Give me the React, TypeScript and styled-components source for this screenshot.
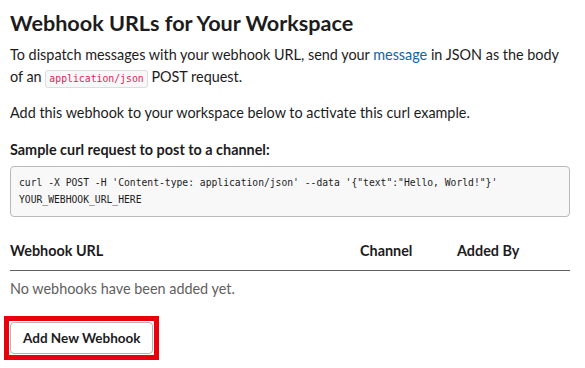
import styled, { createGlobalStyle } from "styled-components"

const Global = createGlobalStyle`
    body {
        margin: 0;
        background: #fff;
        font-family: Lato, "Noto Sans", sans-serif;
        color: #1d1c1d;
    }
`

const Page = styled.div`
    display: flex;
    flex-direction: column;
    padding: 8px 15px 0 10px;
`

const Title = styled.h2`
    margin: 0;
    font-size: 21.6px;
    font-weight: bold;
    line-height: 30px;
`

const Para = styled.p<{ $gap?: number }>`
    margin: ${p => p.$gap ?? 6}px 0 0;
    font-size: 14.4px;
    line-height: 22px;
`

const Link = styled.a`
    color: #1264a3;
    text-decoration: none;
`

const InlineCode = styled.code`
    font-family: "DejaVu Sans Mono", "Liberation Mono", monospace;
    font-size: 9.8px;
    color: #e01e5a;
    background: #f8f8f8;
    border: 1px solid #dddddd;
    border-radius: 3px;
    padding: 2px 3px 3px;
`

const Label = styled.h4`
    margin: 15px 0 0;
    font-size: 14.4px;
    font-weight: bold;
    line-height: 22px;
`

const CodeBlock = styled.pre`
    margin: 5px 0 0;
    padding: 7px 8px 8px 8px;
    background: #f8f8f8;
    border: 1px solid #b9b9b9;
    border-radius: 4px;
    font-family: "DejaVu Sans Mono", "Liberation Mono", monospace;
    font-size: 9.7px;
    line-height: 17px;
    color: #1d1c1d;
    white-space: pre-wrap;
`

const Table = styled.div`
    display: flex;
    flex-direction: column;
    margin-top: 23px;
`

const HeadRow = styled.div`
    display: grid;
    grid-template-columns: 350px 97px 1fr;
    padding-bottom: 8px;
    border-bottom: 1px solid #616061;
`

const HeadCell = styled.div`
    font-size: 14.4px;
    font-weight: bold;
    line-height: 22px;
`

const Empty = styled.div`
    padding: 8px 0 0;
    font-size: 14.4px;
    line-height: 20px;
    color: #616061;
`

const Actions = styled.div`
    display: flex;
    margin-top: 17px;
`

const RedFrame = styled.div`
    display: flex;
    margin-left: -6px;
    padding: 1px;
    border: 5px solid #e8000a;
`

const Button = styled.button`
    height: 32px;
    padding: 0 12px;
    background: #fff;
    border: 1px solid #b3b3b3;
    border-radius: 4px;
    font-family: Lato, "Noto Sans", sans-serif;
    font-size: 13.5px;
    font-weight: bold;
    color: #1d1c1d;
`

export default function App() {
    return (
        <Page>
            <Global />
            <Title>Webhook URLs for Your Workspace</Title>
            <Para>
                To dispatch messages with your webhook URL, send your <Link href="#">message</Link> in JSON as the body
                of an <InlineCode>application/json</InlineCode> POST request.
            </Para>
            <Para $gap={12}>Add this webhook to your workspace below to activate this curl example.</Para>
            <Label>Sample curl request to post to a channel:</Label>
            <CodeBlock>
                {`curl -X POST -H 'Content-type: application/json' --data '{"text":"Hello, World!"}'\nYOUR_WEBHOOK_URL_HERE`}
            </CodeBlock>
            <Table>
                <HeadRow>
                    <HeadCell>Webhook URL</HeadCell>
                    <HeadCell>Channel</HeadCell>
                    <HeadCell>Added By</HeadCell>
                </HeadRow>
                <Empty>No webhooks have been added yet.</Empty>
            </Table>
            <Actions>
                <RedFrame>
                    <Button>Add New Webhook</Button>
                </RedFrame>
            </Actions>
        </Page>
    )
}
